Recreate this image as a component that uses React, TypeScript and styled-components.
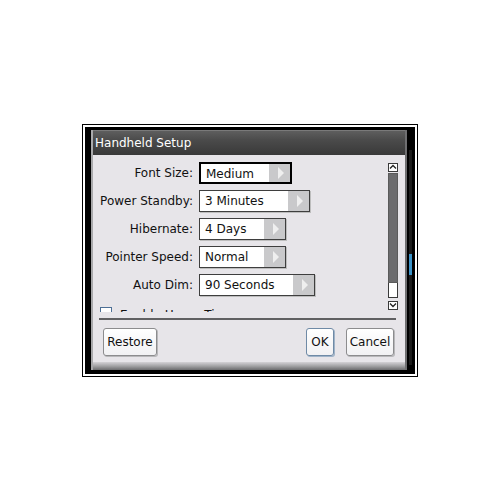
import React from "react";
import styled, { createGlobalStyle } from "styled-components";

const Global = createGlobalStyle`
  html, body { margin: 0; padding: 0; background: #ffffff; }
  body { font-family: "DejaVu Sans", "Liberation Sans", sans-serif; }
  * { box-sizing: border-box; }
`;

const Page = styled.div`
  width: 500px;
  height: 500px;
  display: flex;
  align-items: center;
  justify-content: center;
`;

const Frame = styled.div`
  width: 336px;
  height: 253px;
  border: 1px solid #000;
  padding: 2px;
  background: #fff;
`;

const Screen = styled.div`
  position: relative;
  width: 100%;
  height: 100%;
  background: #000;
  padding: 3px 8px 4px 6px;
  display: flex;
`;

const SideTrack = styled.div`
  position: absolute;
  right: 3px;
  top: 23px;
  width: 3px;
  height: 215px;
  background: #1c1c1c;
`;

const SideThumb = styled.div`
  position: absolute;
  right: 3px;
  top: 127px;
  width: 3px;
  height: 21px;
  background: #3b93c9;
`;

const Dialog = styled.div`
  width: 316px;
  height: 240px;
  display: flex;
  flex-direction: column;
  border-left: 2px solid #a9a9ab;
  border-right: 2px solid #6f6f71;
  background: #e7e5e9;
`;

const TitleBar = styled.div`
  height: 25px;
  flex: none;
  background: linear-gradient(#5e5e5e 0%, #4a4a4a 40%, #393939 100%);
  border-top: 1px solid #7a7a7a;
  color: #fff;
  font-size: 12px;
  line-height: 24px;
  padding-left: 2px;
  white-space: nowrap;
`;

const Body = styled.div`
  flex: 1;
  display: flex;
  flex-direction: column;
  background: #e7e5e9;
`;

const ScrollArea = styled.div`
  height: 157px;
  flex: none;
  display: flex;
`;

const Content = styled.div`
  flex: 1;
  overflow: hidden;
  padding-top: 7px;
  display: flex;
  flex-direction: column;
  gap: 6px;
`;

const Row = styled.div`
  display: flex;
  align-items: center;
  height: 22px;
  flex: none;
`;

const Label = styled.div`
  width: 100px;
  margin-right: 6px;
  text-align: right;
  font-size: 12px;
  color: #111;
  white-space: nowrap;
`;

const Dropdown = styled.div<{ $w: number; $focus?: boolean }>`
  width: ${(p) => p.$w}px;
  height: 22px;
  display: flex;
  border: ${(p) => (p.$focus ? "2px solid #000" : "1px solid #3e3e3e")};
  background: #fff;
  box-shadow: ${(p) => (p.$focus ? "none" : "1px 1px 0 #bdbdbd")};
`;

const DropText = styled.div`
  flex: 1;
  font-size: 12px;
  color: #111;
  line-height: 20px;
  padding-left: 5px;
  white-space: nowrap;
  overflow: hidden;
`;

const DropArrow = styled.div`
  width: 21px;
  flex: none;
  background: #c9c9cb;
  display: flex;
  align-items: center;
  justify-content: center;
  &::after {
    content: "";
    width: 0;
    height: 0;
    border-top: 6px solid transparent;
    border-bottom: 6px solid transparent;
    border-left: 6px solid #efefef;
    margin-left: 2px;
  }
`;

const CheckRow = styled.div`
  display: flex;
  align-items: flex-start;
  height: 22px;
  flex: none;
  padding: 5px 0 0 7px;
  gap: 8px;
  font-size: 12px;
  line-height: 12px;
  color: #111;
  white-space: nowrap;
`;

const CheckBox = styled.div`
  width: 12px;
  height: 12px;
  flex: none;
  border: 1px solid #4d6f95;
  background: #fff;
`;

const CheckText = styled.span`
  margin-top: 2px;
`;

const ScrollBar = styled.div`
  width: 10px;
  margin: 8px 7px 0 0;
  height: 147px;
  display: flex;
  flex-direction: column;
`;

const ScrollBtn = styled.div`
  height: 9px;
  flex: none;
  border: 1px solid #3a3a3a;
  background: #fff;
  display: flex;
  align-items: center;
  justify-content: center;
`;

const ScrollThumb = styled.div`
  flex: 1;
  margin-top: 1px;
  background: #6b6b6d;
  border: 1px solid #5a5a5a;
`;

const ScrollRest = styled.div`
  height: 15px;
  flex: none;
  background: #fff;
  border: 1px solid #3a3a3a;
  border-top: none;
  margin-bottom: 3px;
`;

const Separator = styled.div`
  height: 2px;
  margin: 6px 9px 0 6px;
  background: #606062;
  flex: none;
`;

const ButtonRow = styled.div`
  display: flex;
  margin-top: 8px;
  padding: 0 11px 0 10px;
  gap: 12px;
`;

const Spacer = styled.div`
  flex: 1;
`;

const Button = styled.div<{ $w: number; $focus?: boolean }>`
  width: ${(p) => p.$w}px;
  height: 28px;
  border: 1px solid ${(p) => (p.$focus ? "#6f8aa6" : "#8c8c8e")};
  border-radius: 3px;
  background: linear-gradient(#ffffff, #f1f1f3);
  box-shadow: 1px 1px 0 ${(p) => (p.$focus ? "#9fb3c8" : "#b8b8ba")};
  font-size: 12px;
  color: #111;
  display: flex;
  align-items: center;
  justify-content: center;
`;

const Bevel = styled.div`
  height: 8px;
  flex: none;
  background: linear-gradient(#d4d2d6, #a3a3a5 50%, #6c6c6e);
`;

const Caret = ({ down }: { down?: boolean }) => (
  <svg width="8" height="6" viewBox="0 0 8 6">
    <path
      d={down ? "M1 1.5 L4 4.5 L7 1.5" : "M1 4.5 L4 1.5 L7 4.5"}
      fill="none"
      stroke="#222"
      strokeWidth="1.3"
    />
  </svg>
);

const rows: { label: string; value: string; w: number; focus?: boolean }[] = [
  { label: "Font Size:", value: "Medium", w: 93, focus: true },
  { label: "Power Standby:", value: "3 Minutes", w: 111 },
  { label: "Hibernate:", value: "4 Days", w: 87 },
  { label: "Pointer Speed:", value: "Normal", w: 87 },
  { label: "Auto Dim:", value: "90 Seconds", w: 116 },
];

export default function App() {
  return (
    <>
      <Global />
      <Page>
        <Frame>
          <Screen>
            <Dialog>
              <TitleBar>Handheld Setup</TitleBar>
              <Body>
                <ScrollArea>
                  <Content>
                    {rows.map((r) => (
                      <Row key={r.label}>
                        <Label>{r.label}</Label>
                        <Dropdown $w={r.w} $focus={r.focus}>
                          <DropText>{r.value}</DropText>
                          <DropArrow />
                        </Dropdown>
                      </Row>
                    ))}
                    <CheckRow>
                      <CheckBox />
                      <CheckText>Enable Hover Tips</CheckText>
                    </CheckRow>
                  </Content>
                  <ScrollBar>
                    <ScrollBtn>
                      <Caret />
                    </ScrollBtn>
                    <ScrollThumb />
                    <ScrollRest />
                    <ScrollBtn>
                      <Caret down />
                    </ScrollBtn>
                  </ScrollBar>
                </ScrollArea>
                <Separator />
                <ButtonRow>
                  <Button $w={54}>Restore</Button>
                  <Spacer />
                  <Button $w={28} $focus>
                    OK
                  </Button>
                  <Button $w={48}>Cancel</Button>
                </ButtonRow>
                <Spacer />
                <Bevel />
              </Body>
            </Dialog>
            <SideTrack />
            <SideThumb />
          </Screen>
        </Frame>
      </Page>
    </>
  );
}
